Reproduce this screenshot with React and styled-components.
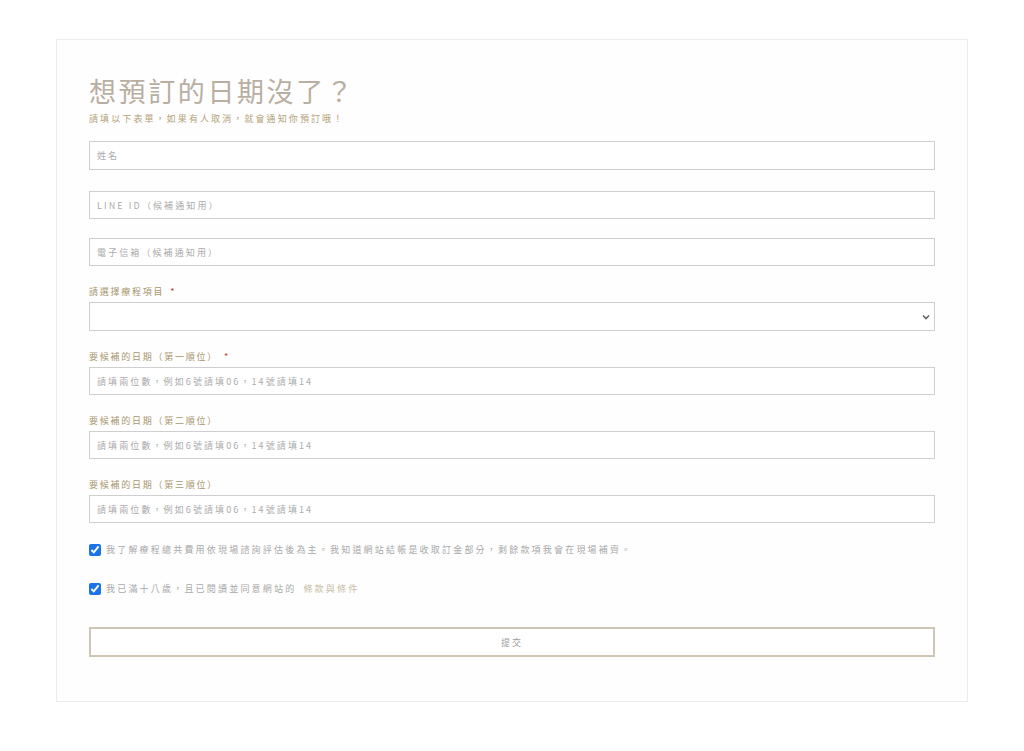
import React from "react";
import styled, { createGlobalStyle } from "styled-components";

const Global = createGlobalStyle`
  html, body { margin: 0; padding: 0; background: #ffffff; }
  body { font-family: "Noto Sans CJK TC", "Noto Sans", sans-serif; }
  * { box-sizing: border-box; }
`;

const Card = styled.div`
  margin: 39px 0 0 56px;
  width: 912px;
  height: 663px;
  border: 1px solid #ececec;
  background: #fefefe;
  padding: 32px 32px 0 32px;
`;

const Title = styled.h1`
  margin: 0;
  font-size: 27px;
  line-height: 38px;
  font-weight: 400;
  letter-spacing: 2.6px;
  color: #b8afa2;
`;

const Subtitle = styled.p`
  margin: 2px 0 15px 0;
  font-size: 9px;
  line-height: 14px;
  letter-spacing: 2.1px;
  color: #b3a27a;
`;

const Field = styled.div`
  display: flex;
  flex-direction: column;
  margin-bottom: ${(p) => p.$mb ?? 19}px;
`;

const Label = styled.label`
  font-size: 9px;
  line-height: 14px;
  letter-spacing: 1.75px;
  color: #a8966f;
  margin-bottom: 3px;
`;

const Star = styled.span`
  color: #c0392b;
  margin-left: 6px;
`;

const Input = styled.input`
  width: 846px;
  height: ${(p) => p.$h ?? 28}px;
  border: 1px solid #cfcfcf;
  background: #fff;
  padding: 0 7px;
  font-family: inherit;
  font-size: 9px;
  letter-spacing: 2.1px;
  color: #666;
  outline: none;
  &::placeholder { color: #ababab; }
`;

const SelectWrap = styled.div`
  position: relative;
  width: 846px;
`;

const Select = styled.select`
  appearance: none;
  width: 846px;
  height: 29px;
  border: 1px solid #cfcfcf;
  background: #fff;
  font-family: inherit;
  font-size: 10px;
  outline: none;
`;

const Chevron = styled.svg`
  position: absolute;
  right: 5px;
  top: 12px;
  pointer-events: none;
`;

const CheckRow = styled.label`
  display: flex;
  align-items: center;
  gap: 5px;
  font-size: 9px;
  line-height: 14px;
  letter-spacing: 2.2px;
  color: #a9a9a9;
  margin-bottom: ${(p) => p.$mb ?? 0}px;
`;

const Box = styled.input`
  width: 12px;
  height: 12px;
  margin: 0;
  accent-color: #1a73e8;
`;

const Link = styled.a`
  color: #c8bca5;
  text-decoration: none;
  margin-left: 2px;
`;

const Submit = styled.button`
  display: block;
  width: 846px;
  height: 30px;
  border: 2px solid #cdc5b5;
  background: #fff;
  font-family: inherit;
  font-size: 9px;
  letter-spacing: 2px;
  color: #9d9d9d;
  cursor: pointer;
`;

const datePh = "請填兩位數，例如6號請填06，14號請填14";

export default function App() {
  return (
    <>
      <Global />
      <Card>
        <Title>想預訂的日期沒了？</Title>
        <Subtitle>請填以下表單，如果有人取消，就會通知你預訂哦！</Subtitle>
        <Field $mb={21}>
          <Input $h={29} placeholder="姓名" />
        </Field>
        <Field $mb={19}>
          <Input placeholder="LINE ID（候補通知用）" />
        </Field>
        <Field $mb={19}>
          <Input placeholder="電子信箱（候補通知用）" />
        </Field>
        <Field>
          <Label>請選擇療程項目<Star>*</Star></Label>
          <SelectWrap>
            <Select defaultValue="">
              <option value=""></option>
            </Select>
            <Chevron width="8" height="6" viewBox="0 0 8 6">
              <path d="M1 1.5 L4 4.5 L7 1.5" fill="none" stroke="#666" strokeWidth="1.6" />
            </Chevron>
          </SelectWrap>
        </Field>
        <Field>
          <Label>要候補的日期（第一順位）<Star>*</Star></Label>
          <Input placeholder={datePh} />
        </Field>
        <Field>
          <Label>要候補的日期（第二順位）</Label>
          <Input placeholder={datePh} />
        </Field>
        <Field $mb={20}>
          <Label>要候補的日期（第三順位）</Label>
          <Input placeholder={datePh} />
        </Field>
        <CheckRow $mb={25}>
          <Box type="checkbox" defaultChecked />
          我了解療程總共費用依現場諮詢評估後為主。我知道網站結帳是收取訂金部分，剩餘款項我會在現場補齊。
        </CheckRow>
        <CheckRow $mb={31}>
          <Box type="checkbox" defaultChecked />
          我已滿十八歲，且已閱讀並同意網站的<Link href="#">條款與條件</Link>
        </CheckRow>
        <Submit type="button">提交</Submit>
      </Card>
    </>
  );
}
